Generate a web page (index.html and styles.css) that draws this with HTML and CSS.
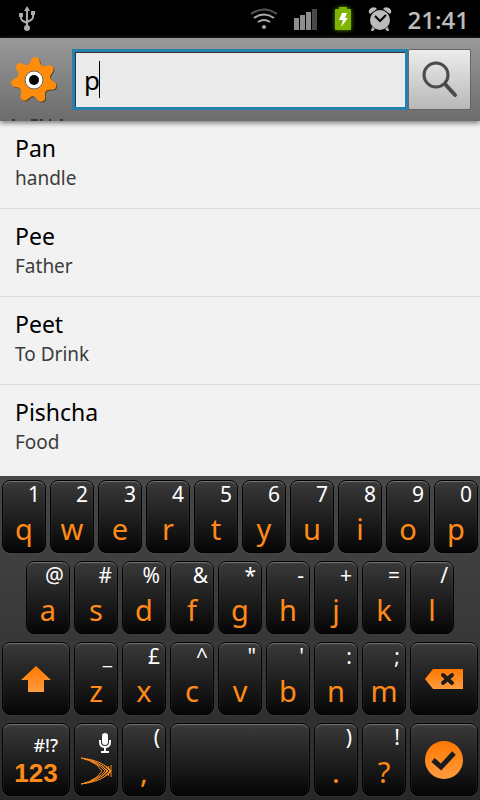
FILE: index.html
```html
<!DOCTYPE html>
<html lang="en">
<head>
    <meta charset="UTF-8">
    <meta name="viewport" content="width=device-width, initial-scale=1.0">
    <title>Dictionary Search</title>
    <link rel="stylesheet" href="styles.css">
</head>
<body>
    <div class="status-bar">
        <svg class="usb" width="18" height="26" viewBox="0 0 18 26" fill="none" stroke="#aaa" stroke-width="2">
            <path d="M9 4v17M3 9v3q0 2 2 3l4 2M15 8v3q0 2-2 3l-4 2"/>
            <path d="M9 0l3 5H6zM1 7h4v4H1zM13 5h4v4h-4z" fill="#aaa" stroke="none"/>
            <circle cx="9" cy="22" r="3" fill="#aaa" stroke="none"/>
        </svg>
        <svg class="wifi" width="28" height="24" viewBox="0 0 28 24" fill="none" stroke-width="2">
            <path d="M1 7q13-9 26 0" stroke="#555"/>
            <path d="M4 11q10-7 20 0M8 15q6-4 12 0" stroke="#aaa"/>
            <circle cx="14" cy="20" r="2" fill="#aaa"/>
        </svg>
        <svg class="signal" width="24" height="24" viewBox="0 0 24 24" fill="#8e8e8e">
            <path d="M0 11h5v12H0zM6 8h5v15H6zM12 5h5v18h-5z"/>
            <path d="M18 2h5v21h-5z" fill="#484848"/>
        </svg>
        <svg class="battery" width="18" height="24" viewBox="0 0 18 24">
            <path d="M5 0h8v2h3q1 0 1 1v19q0 1-1 1H2q-1 0-1-1V3q0-1 1-1h3z" fill="#7db500"/>
            <path d="M8 6h5l-2 5h3l-7 9 2-7H5z" fill="#fff"/>
        </svg>
        <svg class="alarm" width="24" height="26" viewBox="0 0 24 26">
            <circle cx="12" cy="14" r="10" fill="#bbb"/>
            <path d="M2 8q-3-3 1-6 4-2 6 1zM22 8q3-3-1-6-4-2-6 1zM4 21l3 2-2 2H3zM20 21l-3 2 2 2h2z" fill="#bbb"/>
            <path d="M7 10l5 5 6-6" fill="none" stroke="#000" stroke-width="2"/>
        </svg>
        <time>21:41</time>
    </div>

    <form class="search-bar" action="#">
        <svg class="gear" width="52" height="52" viewBox="0 0 52 52">
            <g transform="translate(27 27)" fill="#4a3510" opacity=".7">
                <use href="#gear-shape"/>
            </g>
            <g transform="translate(26 26)" fill="#ff8c0a">
                <g id="gear-shape" transform="rotate(4)">
                    <circle r="16"/>
                    <path id="tooth" d="M-9-13Q-5-15-4-20-3-23 0-23T4-20Q5-15 9-13z"/>
                    <use href="#tooth" transform="rotate(51.43)"/>
                    <use href="#tooth" transform="rotate(102.86)"/>
                    <use href="#tooth" transform="rotate(154.29)"/>
                    <use href="#tooth" transform="rotate(205.71)"/>
                    <use href="#tooth" transform="rotate(257.14)"/>
                    <use href="#tooth" transform="rotate(308.57)"/>
                </g>
            </g>
            <circle cx="26" cy="26" r="9" fill="#fff" stroke="#666" stroke-width="1"/>
            <circle cx="26" cy="26" r="5"/>
        </svg>
        <div class="field">
            <input class="search-input" type="text" value="p" aria-label="Search">
            <span class="caret"></span>
        </div>
        <button class="search-button" type="submit" aria-label="Go">
            <svg width="36" height="38" viewBox="0 0 36 38" fill="none" stroke="#4b4b4b" stroke-linecap="round">
                <circle cx="14" cy="14" r="12" stroke-width="3"/>
                <path d="M23 23l10 11" stroke-width="4"/>
            </svg>
        </button>
        <!-- row above, scrolled almost out of view -->
        <svg class="scrolled-row" width="56" height="2" viewBox="0 0 56 2" stroke="#000" aria-hidden="true">
            <path d="M2 1h3M21 1h7M30 1h3M39 1h2M50 1h3"/>
        </svg>
    </form>

    <ul class="results">
        <li><span class="word">Pan</span><span class="meaning">handle</span></li>
        <li><span class="word">Pee</span><span class="meaning">Father</span></li>
        <li><span class="word">Peet</span><span class="meaning">To Drink</span></li>
        <li><span class="word">Pishcha</span><span class="meaning">Food</span></li>
    </ul>

    <div class="keyboard">
        <button class="key"><span class="alt">1</span>q</button>
        <button class="key"><span class="alt">2</span>w</button>
        <button class="key"><span class="alt">3</span>e</button>
        <button class="key"><span class="alt">4</span>r</button>
        <button class="key"><span class="alt">5</span>t</button>
        <button class="key"><span class="alt">6</span>y</button>
        <button class="key"><span class="alt">7</span>u</button>
        <button class="key"><span class="alt">8</span>i</button>
        <button class="key"><span class="alt">9</span>o</button>
        <button class="key"><span class="alt">0</span>p</button>

        <button class="key indent"><span class="alt">@</span>a</button>
        <button class="key"><span class="alt">#</span>s</button>
        <button class="key"><span class="alt">%</span>d</button>
        <button class="key"><span class="alt">&amp;</span>f</button>
        <button class="key"><span class="alt">*</span>g</button>
        <button class="key"><span class="alt">-</span>h</button>
        <button class="key"><span class="alt">+</span>j</button>
        <button class="key"><span class="alt">=</span>k</button>
        <button class="key"><span class="alt">/</span>l</button>

        <button class="key wide icon" aria-label="Shift">
            <svg width="30" height="26" viewBox="0 0 30 26">
                <defs>
                    <linearGradient id="orange" x1="0" y1="0" x2="0" y2="1">
                        <stop offset="0" stop-color="#ff7800"/>
                        <stop offset="1" stop-color="#ff9c40"/>
                    </linearGradient>
                </defs>
                <path d="M15 0l15 14h-7v12H7V14H0z" fill="url(#orange)"/>
            </svg>
        </button>
        <button class="key"><span class="alt">_</span>z</button>
        <button class="key"><span class="alt">£</span>x</button>
        <button class="key"><span class="alt">^</span>c</button>
        <button class="key"><span class="alt">"</span>v</button>
        <button class="key"><span class="alt">'</span>b</button>
        <button class="key"><span class="alt">:</span>n</button>
        <button class="key"><span class="alt">;</span>m</button>
        <button class="key wide icon" aria-label="Delete">
            <svg class="delete" width="38" height="20" viewBox="0 0 38 20">
                <path d="M0 10L8 0h30v20H8z" fill="url(#orange)"/>
                <path d="M18 6l9 8M27 6l-9 8" stroke="#1c1c1c" stroke-width="4" stroke-linecap="round"/>
            </svg>
        </button>

        <button class="key wide numbers"><span class="symbols">#!?</span>123</button>
        <button class="key voice" aria-label="Voice input">
            <svg class="mic" width="14" height="20" viewBox="0 0 14 20">
                <rect x="4" y="0" width="6" height="12" rx="3" fill="#fff"/>
                <path d="M2 7v2q0 5 5 5t5-5V7M7 14v4M3 19h8" fill="none" stroke="#fff" stroke-width="2"/>
            </svg>
            <svg class="swipe" width="32" height="28" viewBox="0 0 32 28" fill="none" stroke="#ff8f20">
                <path d="M1 1Q22 3 31 14 22 25 1 27"/>
                <path d="M1 1Q19 4 28 14 19 24 1 27"/>
                <path d="M4 2Q18 5 25 14 18 23 4 26"/>
                <path d="M10 4Q18 7 22 14 18 21 10 24"/>
                <path d="M21 8l6 6-6 6M24 8l6 6-6 6M28 9l2 5-2 5M31 8v12"/>
            </svg>
        </button>
        <button class="key"><span class="alt">(</span>,</button>
        <button class="key space" aria-label="Space"></button>
        <button class="key"><span class="alt">)</span>.</button>
        <button class="key"><span class="alt">!</span>?</button>
        <button class="key wide icon" aria-label="Done">
            <svg width="40" height="40" viewBox="0 0 40 40">
                <circle cx="20" cy="20" r="19" fill="url(#orange)"/>
                <path d="M9 20l8 7 13-14" fill="none" stroke="#1c1c1c" stroke-width="5"/>
            </svg>
        </button>
    </div>

    <script>
        const input = document.querySelector('.search-input');
        const caret = document.querySelector('.caret');

        // The field draws its own caret, hide it once the query changes
        input.addEventListener('input', () => {
            caret.hidden = true;
            input.style.caretColor = 'auto';
        });
    </script>
</body>
</html>
```
FILE: styles.css
```css
* {
    margin: 0;
    padding: 0;
    box-sizing: border-box;
}

body {
    display: flex;
    flex-direction: column;
    min-height: 100vh;
    background: #f2f2f2;
    font-family: "Noto Sans", "Open Sans", sans-serif;
}

.status-bar {
    display: flex;
    align-items: center;
    gap: 16px;
    height: 38px;
    padding: 0 11px 0 18px;
    background: #000;
    color: #bbb;
}

.usb {
    margin-right: auto;
}

.battery {
    filter: drop-shadow(0 0 2px #5c9000);
}

.status-bar time {
    font-family: "Open Sans", sans-serif;
    font-size: 24px;
    font-weight: 600;
}

.search-bar {
    position: relative;
    display: flex;
    align-items: center;
    height: 83px;
    padding: 0 9px 0 8px;
    background: linear-gradient(#999, #6c6c6c);
    box-shadow: 0 2px 5px #777;
    z-index: 1;
}

.gear {
    margin-right: 12px;
}

.field {
    position: relative;
    flex: 1;
    min-width: 0;
}

.search-input {
    display: block;
    width: 100%;
    height: 61px;
    padding: 0 9px;
    border: 3px solid #2481ae;
    border-radius: 0;
    outline: none;
    background: #eaeaea;
    box-shadow: inset 1px 1px 0 #333;
    font-family: inherit;
    font-size: 26px;
    color: #000;
    caret-color: transparent;
}

.caret {
    position: absolute;
    top: 12px;
    left: 27px;
    width: 1px;
    height: 37px;
    background: #000;
}

.caret[hidden] {
    display: none;
}

.search-button {
    display: flex;
    align-items: center;
    justify-content: center;
    width: 63px;
    height: 61px;
    border: 1px solid #666;
    border-radius: 2px;
    background: linear-gradient(#ececec, #b8b8b8);
}

.scrolled-row {
    position: absolute;
    left: 10px;
    bottom: 0;
}

.results {
    flex: 1;
    list-style: none;
    overflow: hidden;
}

.results li {
    display: flex;
    flex-direction: column;
    height: 88px;
    padding: 11px 15px;
    border-bottom: 1px solid #dadada;
}

.results li:last-child {
    border-bottom: none;
}

.word {
    font-size: 23px;
    line-height: 32px;
    color: #000;
}

.meaning {
    font-size: 19px;
    line-height: 28px;
    color: #3c3c3c;
}

.keyboard {
    display: grid;
    grid-template-columns: repeat(20, 1fr);
    grid-auto-rows: 73px;
    row-gap: 8px;
    padding: 4px 0;
    background: linear-gradient(#474747, #282828);
}

.key {
    display: flex;
    flex-direction: column;
    align-items: center;
    grid-column: span 2;
    margin: 0 2px;
    padding: 0 5px;
    border: 1px solid #000;
    border-radius: 8px;
    background: linear-gradient(#3a3a3a, #050505);
    box-shadow: inset 0 1px 1px #777, 0 0 1px #666;
    font-family: inherit;
    font-size: 29px;
    line-height: 44px;
    color: #ff8a18;
}

.alt {
    align-self: flex-end;
    font-size: 21px;
    line-height: 26px;
    color: #fff;
}

.indent {
    grid-column: 2 / span 2;
}

.wide {
    grid-column: span 3;
}

.space {
    grid-column: span 6;
}

.icon {
    justify-content: center;
}

.numbers {
    padding: 10px 11px;
    font-family: "Liberation Sans", Arial, sans-serif;
    font-size: 26px;
    font-weight: bold;
    line-height: 34px;
}

.symbols {
    align-self: flex-end;
    font-family: "Noto Sans", sans-serif;
    font-size: 18px;
    font-weight: 500;
    line-height: 22px;
    color: #fff;
}

.voice {
    gap: 4px;
    padding-top: 9px;
}

.mic {
    align-self: flex-end;
}
```
